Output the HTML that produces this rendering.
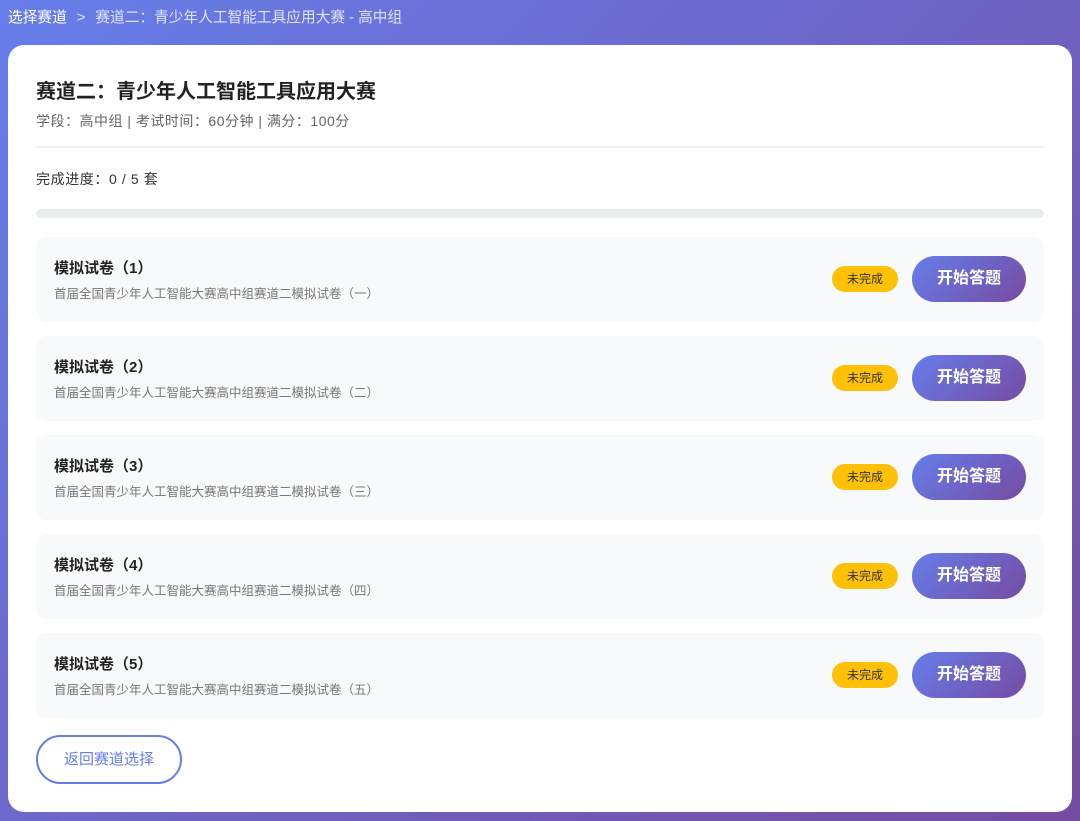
<!DOCTYPE html>
<html><head><meta charset="utf-8"><style>
*{margin:0;padding:0;box-sizing:border-box}
body{width:1080px;height:821px;overflow:hidden;background:linear-gradient(135deg,#667eea 0%,#764ba2 100%);font-family:"Liberation Sans","Noto Sans CJK SC",sans-serif;position:relative}
.bc{position:absolute;left:8px;top:6px;font-size:14.7px;color:rgba(255,255,255,.8)}
.bc b{font-weight:normal;color:#fff}
.bc i{font-style:normal;margin:0 10px}
.card{position:absolute;left:8px;top:45px;width:1064px;height:767px;background:#fff;border-radius:16px}
h1{position:absolute;left:28px;top:30px;font-size:20px;color:#222;font-weight:bold}
.meta{position:absolute;left:28px;top:66px;font-size:14px;letter-spacing:0.5px;color:#666}
.hr{position:absolute;left:28px;top:101px;width:1008px;height:2px;background:#f0f0f0}
.prog{position:absolute;left:28px;top:124px;font-size:14px;letter-spacing:0.6px;color:#333}
.bar{position:absolute;left:28px;top:164px;width:1008px;height:9px;background:#e9ecef;border-radius:5px}
.item{position:absolute;left:28px;width:1008px;height:85px;background:#f8f9fa;border-radius:10px}
.item .t{position:absolute;left:18px;top:20px;font-size:15px;font-weight:bold;color:#222}
.item .d{position:absolute;left:18px;top:46px;font-size:12.5px;color:#777}
.badge{position:absolute;left:796px;top:29px;width:66px;height:26px;border-radius:13px;background:#ffc107;color:#333;font-size:12px;text-align:center;line-height:26px}
.btn{position:absolute;left:876px;top:19px;width:114px;height:46px;border-radius:23px;background:linear-gradient(135deg,#667eea,#764ba2);color:#fff;font-size:16px;font-weight:bold;text-align:center;line-height:46px}
.back{position:absolute;left:28px;top:690px;width:146px;height:49px;border:2px solid #667eea;border-radius:25px;color:#667eea;font-size:15px;text-align:center;line-height:45px}
</style></head><body>
<div class="bc"><b>选择赛道</b><i>&gt;</i>赛道二：青少年人工智能工具应用大赛 - 高中组</div>
<div class="card">
<h1>赛道二：青少年人工智能工具应用大赛</h1>
<div class="meta">学段：高中组 | 考试时间：60分钟 | 满分：100分</div>
<div class="hr"></div>
<div class="prog">完成进度：0 / 5 套</div>
<div class="bar"></div>
<div class="item" style="top:192px"><div class="t">模拟试卷（1）</div><div class="d">首届全国青少年人工智能大赛高中组赛道二模拟试卷（一）</div><div class="badge">未完成</div><div class="btn">开始答题</div></div>
<div class="item" style="top:291px"><div class="t">模拟试卷（2）</div><div class="d">首届全国青少年人工智能大赛高中组赛道二模拟试卷（二）</div><div class="badge">未完成</div><div class="btn">开始答题</div></div>
<div class="item" style="top:390px"><div class="t">模拟试卷（3）</div><div class="d">首届全国青少年人工智能大赛高中组赛道二模拟试卷（三）</div><div class="badge">未完成</div><div class="btn">开始答题</div></div>
<div class="item" style="top:489px"><div class="t">模拟试卷（4）</div><div class="d">首届全国青少年人工智能大赛高中组赛道二模拟试卷（四）</div><div class="badge">未完成</div><div class="btn">开始答题</div></div>
<div class="item" style="top:588px"><div class="t">模拟试卷（5）</div><div class="d">首届全国青少年人工智能大赛高中组赛道二模拟试卷（五）</div><div class="badge">未完成</div><div class="btn">开始答题</div></div>
<div class="back">返回赛道选择</div>
</div>
</body></html>
